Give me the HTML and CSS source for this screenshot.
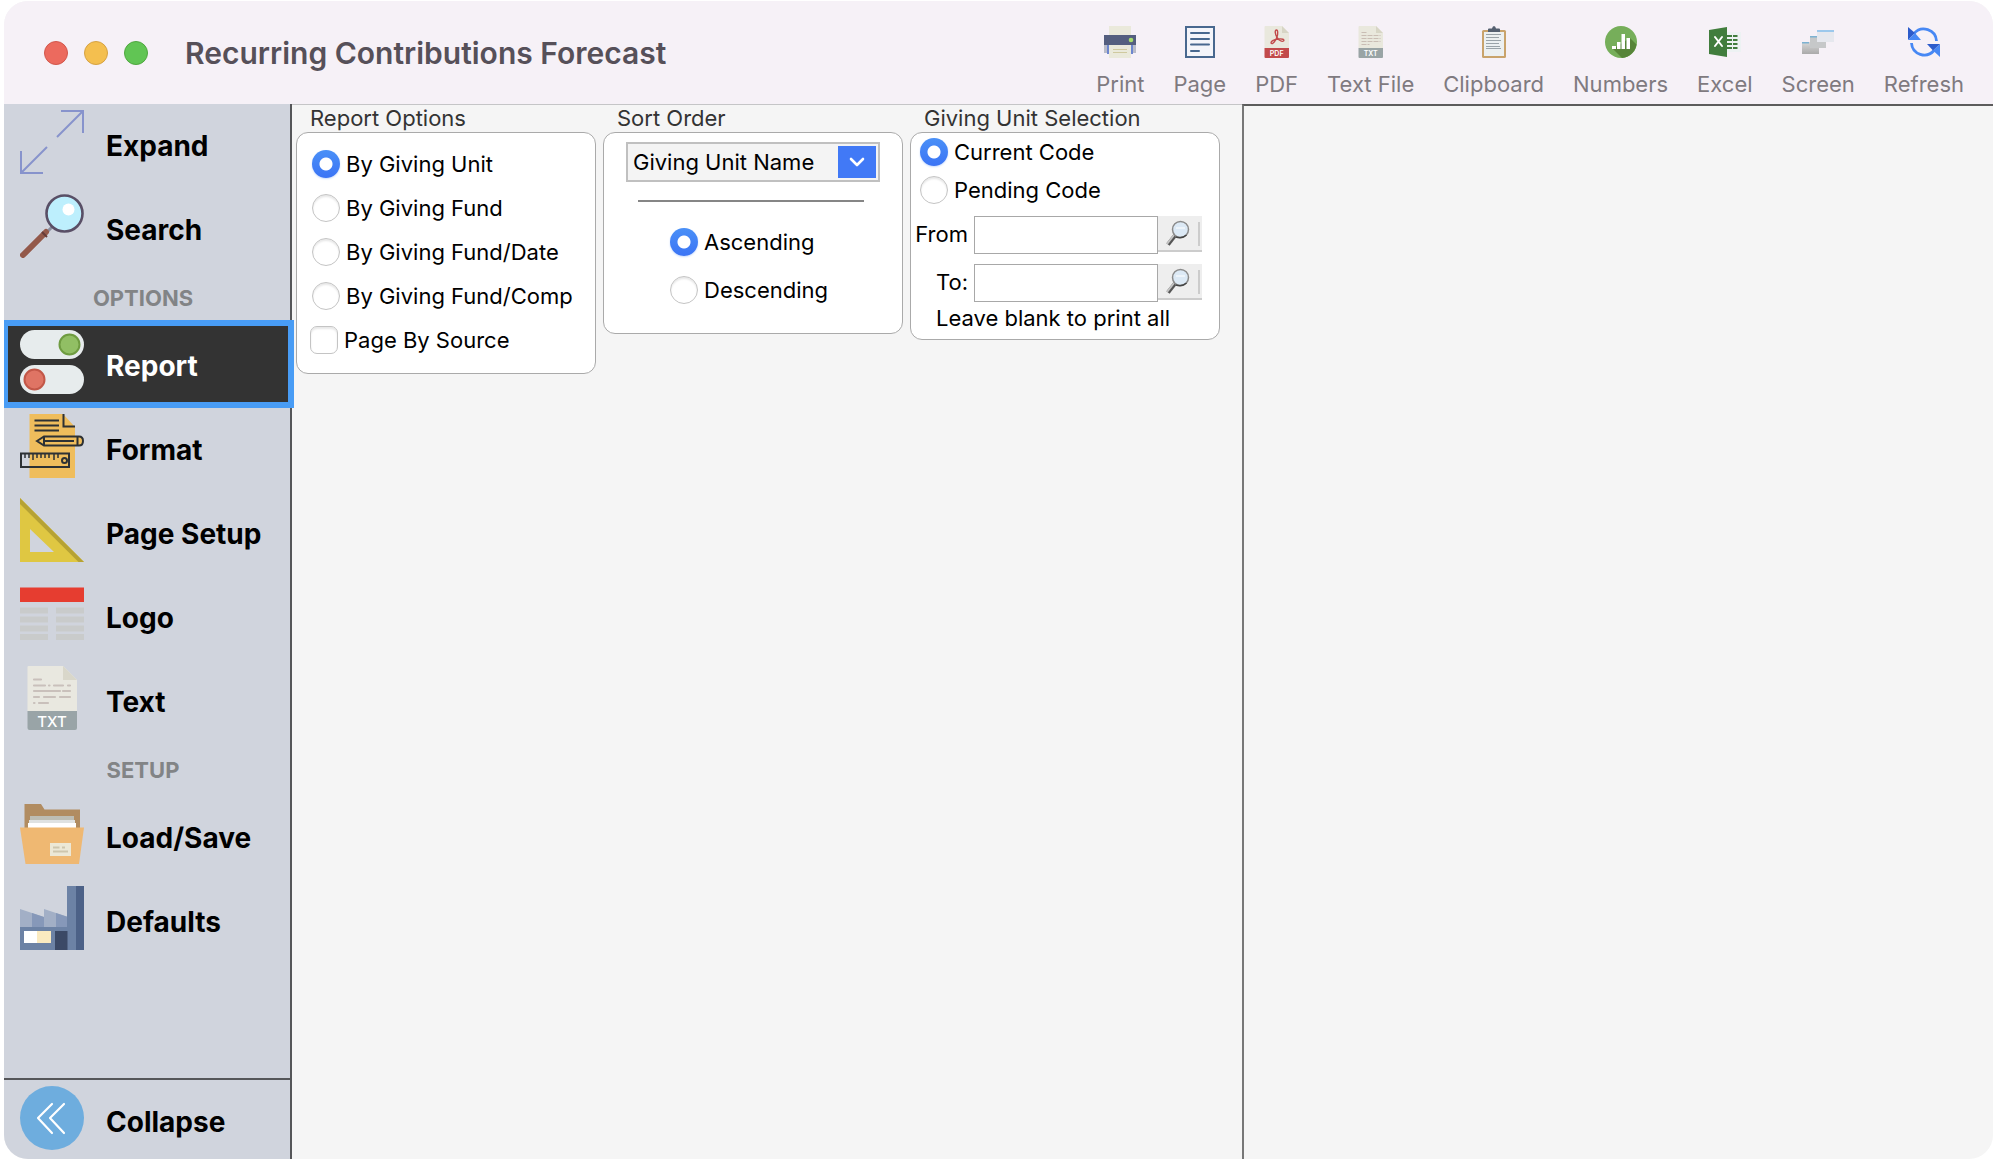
FILE: index.html
```html
<!DOCTYPE html>
<html lang="en">
<head>
	<title>Recurring Contributions Forecast</title>
	<meta charset="utf-8" />
	<link rel="stylesheet" href="styles.css">
</head>
<body>
	<div class="window">
		<header class="titlebar">
			<div class="lights">
				<button class="light close" aria-label="Close"></button>
				<button class="light minimize" aria-label="Minimize"></button>
				<button class="light maximize" aria-label="Maximize"></button>
			</div>
			<h1>Recurring Contributions Forecast</h1>
			<div class="toolbar">
				<button>
					<svg viewBox="0 0 32 32"><path fill="#eae9db" d="M5 0h22v10H5z"/><path fill="#b9bcc9" d="M0 19h32v8H0z"/><path fill="#6d86cf" d="M3 19h26v9H3z"/><path fill="#545e7f" d="M0 9h32v10H0z"/><circle cx="27" cy="14" r="2.3" fill="#a7dc6d"/><path fill="#eae9db" d="M5 19h22v13H5z"/><path stroke="#cfc99f" d="M9 23.500h14M9 26.500h14"/></svg>
					Print
				</button>
				<button>
					<svg viewBox="0 0 32 32"><path fill="#f4f5fa" stroke="#48688f" stroke-width="2" d="M2 1h28v30H2z"/><path stroke="#48688f" stroke-width="2" stroke-linecap="round" d="M7 7h18M7 13h18M7 18.500h18M7 25h8"/></svg>
					Page
				</button>
				<button>
					<svg viewBox="0 0 32 32"><path fill="#e9e8dd" d="M3.500 1q0-1 1-1H21l7 7v15H3.500z"/><path fill="#d7d5c5" d="M21 0l7 7h-7z"/><path fill="none" stroke="#c24a4b" stroke-width="1.400" d="M15.500 4c-2 0-1.500 4 .5 7.500c2 3 5 4.500 6.500 3.500c1.500-1.500-1.500-2.500-5-2c-4 .5-7.500 2-7.500 4c1.500 2.500 5-3 6-6c1-3 1-7-.5-7z"/><path fill="#c24a4b" d="M3.500 22H28v9q0 1-1 1H4.500q-1 0-1-1z"/><text class="file-tag" x="15.700" y="29.600">PDF</text></svg>
					PDF
				</button>
				<button>
					<svg viewBox="0 0 32 32"><path fill="#e9e8dd" d="M3.500 1q0-1 1-1H21l7 7v15H3.500z"/><path fill="#d7d5c5" d="M21 0l7 7h-7z"/><path stroke="#c9bdb4" stroke-dasharray="5 1" d="M6.500 6.500h5M6.500 9.500h19M6.500 12.500h19M6.500 15.500h19M6.500 18.500h8"/><path fill="#99a4a5" d="M3.500 22H28v9q0 1-1 1H4.500q-1 0-1-1z"/><text class="file-tag" x="15.700" y="29.600">TXT</text></svg>
					Text File
				</button>
				<button>
					<svg viewBox="0 0 32 32"><rect x="4" y="4" width="24" height="28" rx="1.500" fill="#c9a36b"/><path fill="#ecf0f1" d="M6 6h20v24H6z"/><path stroke="#9aa3a8" stroke-width="1" d="M8 8.500h15M8 11.500h13M8 14.500h15M8 17.500h13M8 20.500h14M8 22.500h15"/><path fill="#556070" d="M10 6V3.500q0-1 1-1h3q.5-2.500 2-2.500t2 2.500h3q1 0 1 1V6z"/></svg>
					Clipboard
				</button>
				<button>
					<svg viewBox="0 0 32 32"><circle cx="16" cy="16" r="16" fill="#76ae5a"/><path fill="#578539" d="M25 12l6.500 6.500A16 16 0 0 1 17 32l-9-9z"/><path fill="#fff" d="M7 20h4v3H7zM12 16h3.500v7H12zM16.500 8H20v15h-3.500zM21.500 12H25v11h-3.500z"/></svg>
					Numbers
				</button>
				<button>
					<svg viewBox="0 0 32 32"><path fill="#edf2f3" d="M18 6h14v20H18z"/><path stroke="#417d3d" stroke-width="2" d="M18 10h5M18 14h5M18 18h5M18 22h5M24 10h4.500M24 14h4.500M24 18h4.500M24 22h4.500"/><path fill="#417d3d" d="M0 4l18-3v30L0 28z"/><path stroke="#fff" stroke-width="2" stroke-linecap="round" d="M6 11l7 9M13 11l-7 9"/></svg>
					Excel
				</button>
				<button>
					<svg viewBox="0 0 32 32"><defs><linearGradient id="pane" x2="0" y2="1"><stop offset="0" stop-color="#d8d8d8"/><stop offset="1" stop-color="#aaa"/></linearGradient></defs><path fill="url(#pane)" d="M0 16h17v12H0z"/><path fill="#7db2d2" d="M0 16h7v1.500H0z"/><path fill="#c6c8c9" d="M8 10h16v12H8z"/><path fill="#7db2d2" d="M8 10h7v1.500H8z"/><path fill="#e6e8ee" d="M15 4h17v12H15z"/><path fill="#9cc8ec" d="M15 4h17v2H15z"/></svg>
					Screen
				</button>
				<button>
					<svg viewBox="0 0 32 32"><g fill="none" stroke="#4788f4" stroke-width="2.800"><path d="M6 7.500A12.800 12.800 0 0 1 28.500 15"/><path d="M26 24.500A12.800 12.800 0 0 1 3.500 17"/></g><path fill="#2c5bcb" d="M0 1v13l7-7z"/><path fill="#4788f4" d="M0 14h13L7 7z"/><path fill="#4788f4" d="M32 31V18l-7 6.500z"/><path fill="#2c5bcb" d="M32 18H19l6 6.500z"/></svg>
					Refresh
				</button>
			</div>
		</header>
		<div class="panes">
			<nav class="sidebar">
				<button class="item">
					<svg viewBox="0 0 64 64"><path fill="none" stroke="#8793cc" stroke-width="2" d="M37 27L62.500 1.500M41 1h22v22M27 37L1.500 62.500M1 41v22h22"/></svg>
					<span>Expand</span>
				</button>
				<button class="item">
					<svg viewBox="0 0 64 64"><path stroke="#8a8fa0" stroke-width="3" d="M27 38l5-5"/><path stroke="#93594a" stroke-width="6" stroke-linecap="round" d="M3 61l23-23"/><path stroke="#663c38" stroke-width="2" d="M22 38l5 5"/><circle cx="44.500" cy="19.500" r="18" fill="#bdeffd" stroke="#594f66" stroke-width="2.600"/><circle cx="48.500" cy="15.500" r="6" fill="#fff"/></svg>
					<span>Search</span>
				</button>
				<h2>OPTIONS</h2>
				<button class="item selected">
					<svg viewBox="0 0 64 64"><rect width="64" height="29" rx="14.500" fill="#e7eced"/><circle cx="49.500" cy="14.500" r="10" fill="#91bf64" stroke="#6f9c41" stroke-width="2"/><rect y="35" width="64" height="29" rx="14.500" fill="#e7eced"/><circle cx="14.500" cy="49.500" r="10" fill="#df7464" stroke="#c25748" stroke-width="2"/></svg>
					<span>Report</span>
				</button>
				<button class="item">
					<svg viewBox="0 0 64 64"><path fill="#efbd5c" d="M9.500 0H43l12 13v51H9.500z"/><g fill="none" stroke="#2d3134" stroke-width="2"><path d="M43.500 0v12.500H55M14.500 6.500H39M14.500 11.500H39M14.500 16.500H39"/><path fill="#efbd5c" d="M17 27l7-4.500h35q4 0 4 4.500t-4 4.500H24z"/><path d="M24 27h30M57.500 22.500v9M24 22.500v9M1 39.500h48v13.500H1z"/><path stroke-width="1.500" d="M5 40v4M9 40v4M13 40v6M17 40v4M21 40v4M25 40v4M29 40v4M34 40v6M38 40v4"/><circle cx="44.500" cy="46.500" r="2.500"/></g></svg>
					<span>Format</span>
				</button>
				<button class="item">
					<svg viewBox="0 0 64 64"><path fill="#dfc742" fill-rule="evenodd" d="M0 0l64 64H0zM10 31v23h24z"/><path fill="#b6a234" d="M0 0l64 64h-5.500L0 6z"/></svg>
					<span>Page Setup</span>
				</button>
				<button class="item">
					<svg viewBox="0 0 64 64"><path fill="#e63d30" d="M0 5.500h64V20H0z"/><path stroke="#c9cbcb" stroke-width="6" d="M0 28.500h28M36 28.500h28M0 37.500h28M36 37.500h28M0 46.500h28M36 46.500h28M0 55h28M36 55h28"/></svg>
					<span>Logo</span>
				</button>
				<button class="item">
					<svg viewBox="0 0 64 64"><path fill="#e9e8e0" d="M7.500 1q0-1 1-1H43l14 14v31H7.500z"/><path fill="#d9d7ca" d="M43 0l14 14H43z"/><path stroke="#c9c0bb" stroke-width="2.200" stroke-linecap="round" d="M14 13.500h7M14 19.500h11M29 19.500h.5M34 19.500h9M48 19.500h2M14 25h26M43 25h7M14 31h5M24 31h11M40 31h10M14 37h.5M19 37h9"/><path fill="#99a4a7" d="M7.500 45H57v17q0 2-2 2H9.500q-2 0-2-2z"/><text class="doc-tag" x="32" y="60.500">TXT</text></svg>
					<span>Text</span>
				</button>
				<h2>SETUP</h2>
				<button class="item">
					<svg viewBox="0 0 64 64"><path fill="#b18c61" d="M4.500 2H21l3.500 5.500H60V28H4.500z"/><path fill="#bdbdb4" d="M10 14h44v6H10z"/><path fill="#dfe2e2" d="M9 18h46v6H9z"/><path fill="#fff" d="M8 21h48v6H8z"/><path fill="#efb872" d="M0 25.500h64L59 62H5.500z"/><path fill="#ece8d6" d="M30 41h21v13H30z"/><path stroke="#cdc6ad" stroke-width="2" d="M33 45.500h6.500M42 45.500h3M33 49.500h15"/></svg>
					<span>Load/Save</span>
				</button>
				<button class="item">
					<svg viewBox="0 0 64 64"><path fill="#a2afc6" d="M0 23l24 8v-8l24 8v11H0z"/><path fill="#8698b9" d="M12 27l12 4v11H12zM36 27l12 4v11H36z"/><path fill="#6c82a5" d="M0 41h47V0h10v64H0z"/><path fill="#4c6187" d="M56 0h8v64h-8z"/><path fill="#fff" d="M4 45h13v12H4z"/><path fill="#faeac0" d="M17 45h14v12H17z"/><path fill="#3b4966" d="M35 45h12.500v19H35z"/></svg>
					<span>Defaults</span>
				</button>
				<button class="item collapse">
					<svg viewBox="0 0 64 64"><circle cx="32" cy="32" r="32" fill="#6eadde"/><path fill="none" stroke="#fff" stroke-width="2.200" stroke-linecap="round" stroke-linejoin="round" d="M32 18L18 32l14 15M44 18L30 32l14 15"/></svg>
					<span>Collapse</span>
				</button>
			</nav>
			<main class="options">
				<fieldset>
					<legend>Report Options</legend>
					<div class="box report-options">
						<label><input type="radio" name="report" value="unit" checked> By Giving Unit</label>
						<label><input type="radio" name="report" value="fund"> By Giving Fund</label>
						<label><input type="radio" name="report" value="date"> By Giving Fund/Date</label>
						<label><input type="radio" name="report" value="comp"> By Giving Fund/Comp</label>
						<label class="tick"><input type="checkbox" name="source"> Page By Source</label>
					</div>
				</fieldset>
				<fieldset>
					<legend>Sort Order</legend>
					<div class="box sort-order">
						<div class="dropdown">
							<select aria-label="Sort by">
								<option>Giving Unit Name</option>
							</select>
							<svg viewBox="0 0 38 32"><path fill="#4179f6" d="M0 0h38v32H0z"/><path fill="none" stroke="#fff" stroke-width="2.600" stroke-linecap="round" stroke-linejoin="round" d="M13 13l6 6 6-6"/></svg>
						</div>
						<hr>
						<div class="directions">
							<label><input type="radio" name="direction" value="asc" checked> Ascending</label>
							<label><input type="radio" name="direction" value="desc"> Descending</label>
						</div>
					</div>
				</fieldset>
				<fieldset>
					<legend>Giving Unit Selection</legend>
					<div class="box unit-selection">
						<label><input type="radio" name="code" value="current" checked> Current Code</label>
						<label><input type="radio" name="code" value="pending"> Pending Code</label>
						<div class="range">
							<label for="inpFrom">From</label>
							<input type="text" id="inpFrom">
							<button aria-label="Find from"><svg viewBox="0 0 44 36"><path stroke="#555" stroke-width="4" d="M10 28.500l7-9"/><path stroke="#c4c4c4" stroke-width="2" d="M9 28l7-9"/><circle cx="22.500" cy="13.500" r="8" fill="#dce9f5" stroke="#8b8b8b" stroke-width="1.500"/><path fill="none" stroke="#444" stroke-width="1.500" d="M18 21q6 2 10.500-2"/><path stroke="#fff" d="M18 12h9"/><path stroke="#ccc" stroke-width="2" d="M41 6v24"/></svg></button>
						</div>
						<div class="range">
							<label for="inpTo">To:</label>
							<input type="text" id="inpTo">
							<button aria-label="Find to"><svg viewBox="0 0 44 36"><path stroke="#555" stroke-width="4" d="M10 28.500l7-9"/><path stroke="#c4c4c4" stroke-width="2" d="M9 28l7-9"/><circle cx="22.500" cy="13.500" r="8" fill="#dce9f5" stroke="#8b8b8b" stroke-width="1.500"/><path fill="none" stroke="#444" stroke-width="1.500" d="M18 21q6 2 10.500-2"/><path stroke="#fff" d="M18 12h9"/><path stroke="#ccc" stroke-width="2" d="M41 6v24"/></svg></button>
						</div>
						<p>Leave blank to print all</p>
					</div>
				</fieldset>
			</main>
			<section class="preview"></section>
		</div>
	</div>
</body>
</html>
```
FILE: styles.css
```css
/* general styles */
* { box-sizing: border-box; }
body { margin: 0; padding: 1px 1px 1px 4px; background-color: #fff; font-family: Inter, "Liberation Sans", sans-serif; font-size: 22px; line-height: 28px; color: #000; }
button, select, input { font: inherit; color: inherit; }
button { margin: 0; padding: 0; border: 0; background: none; cursor: pointer; }
h1, h2, p { margin: 0; }
svg { display: block; }
.window { display: flex; flex-direction: column; min-height: calc(100vh - 2px); border-radius: 24px; overflow: hidden; background-color: #f5f5f5; }

/* title bar */
.titlebar { display: flex; align-items: center; height: 103px; padding: 0 29px 0 40px; background-color: #f6f1f7; }
.lights { display: flex; gap: 16px; margin-right: 37px; }
.light { width: 24px; height: 24px; border-radius: 50%; }
.close { background-color: #ec6a5e; border: 1px solid #d2574c; }
.minimize { background-color: #f4bf4f; border: 1px solid #d6a243; }
.maximize { background-color: #61c554; border: 1px solid #4fa73f; }
h1 { flex: 1; font-size: 30px; font-weight: 600; line-height: 36px; color: #565059; }
.toolbar { display: flex; gap: 29px; padding-top: 19px; }
.toolbar button { display: flex; flex-direction: column; align-items: center; gap: 12px; color: #7f7a80; }
.toolbar svg { width: 32px; height: 32px; }
.file-tag { font-size: 7px; font-weight: 600; text-anchor: middle; fill: #fff; }

/* sidebar */
.panes { display: flex; flex: 1; }
.sidebar { display: flex; flex-direction: column; width: 288px; border-right: 2px solid #555659; background-color: #d0d4dd; }
.sidebar h2 { height: 52px; padding-right: 8px; font-size: 22px; font-weight: 700; line-height: 52px; text-align: center; color: #828486; }
.item { position: relative; display: flex; align-items: center; gap: 22px; height: 84px; padding: 0 16px 8px; font-size: 28px; font-weight: 700; text-align: left; }
.item svg { flex: none; width: 64px; height: 64px; }
.item span { padding-top: 7px; }
.selected { background-color: #333; color: #fff; }
.selected::after { content: ""; position: absolute; top: -4px; right: -4px; bottom: 0; left: -2px; border: 6px solid #489cf5; }
.collapse { height: 81px; margin-top: auto; border-top: 2px solid #555659; padding-bottom: 3px; }
.doc-tag { font-size: 15px; font-weight: 500; text-anchor: middle; fill: #fff; }

/* option groups */
.options { display: flex; align-items: flex-start; gap: 7px; width: 950px; padding-left: 4px; border-top: 1px solid #c5c5c7; }
fieldset { min-width: 0; margin: 0; padding: 0; border: 0; }
legend { padding: 0 0 0 14px; line-height: 27px; color: #333; }
.box { width: 300px; border: 1px solid #aaa; border-radius: 12px; background-color: #fff; }
.box label { display: flex; align-items: center; gap: 6px; white-space: nowrap; }
input[type=radio], input[type=checkbox] { flex: none; appearance: none; width: 28px; height: 28px; margin: 0; border: 1px solid #c4c4c4; background-color: #fff; box-shadow: inset 0 2px 2px #e8e8e8; }
input[type=radio] { border-radius: 50%; }
input[type=checkbox] { border-radius: 7px; }
input[type=radio]:checked { border: 0; background: radial-gradient(circle, #fff 6px, transparent 7px), linear-gradient(#4a90f7, #3b74f5); box-shadow: 0 1px 2px #c9dcfc; }
input[type=checkbox]:checked { background-color: #4179f6; }
.report-options { display: flex; flex-direction: column; gap: 16px; padding: 17px 15px 19px; }
.tick { margin-left: -2px; }
.sort-order { height: 202px; padding: 9px 22px; }
.dropdown { position: relative; width: 254px; }
.dropdown select { appearance: none; display: block; width: 100%; height: 40px; padding: 0 44px 0 5px; border: 2px solid #c0c0c0; border-radius: 0; background-color: #f4f4f4; }
.dropdown svg { position: absolute; top: 4px; right: 4px; width: 38px; height: 32px; pointer-events: none; }
hr { height: 2px; margin: 18px 16px 26px 12px; border: 0; background-color: #868686; }
.directions { display: flex; flex-direction: column; gap: 20px; padding-left: 44px; }
.unit-selection { width: 310px; padding: 5px 17px 7px 4px; }
.unit-selection > label { margin: 0 0 10px 5px; }
.range { display: flex; align-items: flex-start; justify-content: flex-end; margin: 12px 0 10px; }
.range + .range { margin: 10px 0 2px; }
.range label { margin-right: 6px; line-height: 36px; }
.range input { width: 184px; height: 38px; padding: 0 6px; border: 1px solid #a8a8a8; border-radius: 0; background-color: #fff; }
.range button { width: 44px; height: 36px; border-bottom: 2px solid #ccc; background-color: #eee; }
.range svg { width: 44px; height: 36px; }
.unit-selection p { padding-left: 21px; }

/* report preview */
.preview { flex: 1; border-top: 2px solid #5c5c5c; border-left: 2px solid #777; }
```
